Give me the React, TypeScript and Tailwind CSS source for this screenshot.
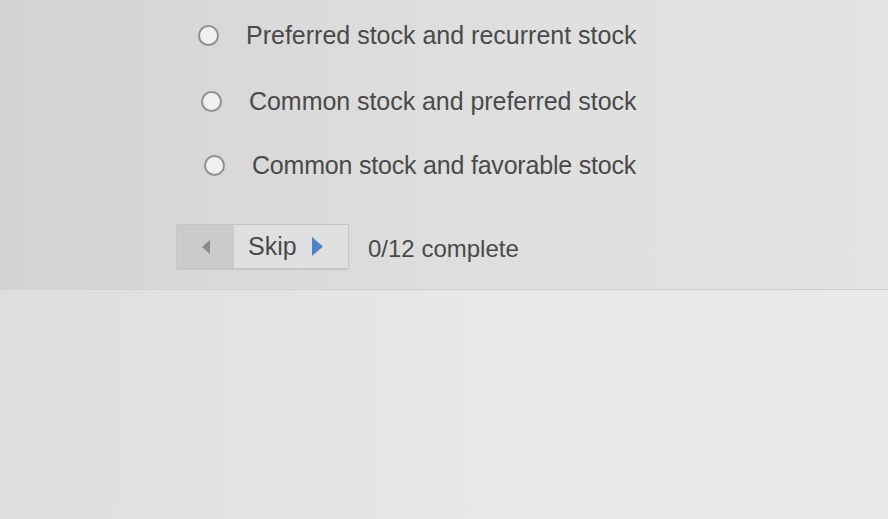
import React from "react";

const options = [
  { label: "Preferred stock and recurrent stock", pl: "pl-[198px]", pt: "pt-[22px]", tr: "tracking-[0px]" },
  { label: "Common stock and preferred stock", pl: "pl-[201px]", pt: "pt-[40px]", tr: "tracking-[-0.05px]" },
  { label: "Common stock and favorable stock", pl: "pl-[204px]", pt: "pt-[38px]", tr: "tracking-[-0.2px]" },
];

export default function App() {
  return (
    <div
      className="w-[888px] h-[519px] overflow-hidden flex flex-col text-[#4a4a4a]"
      style={{ fontFamily: '"Liberation Sans", Arial, sans-serif' }}
    >
      <div className="h-[289px] bg-linear-to-r from-[#d3d3d3] via-[#dedede] to-[#e3e3e3] flex flex-col">
        {options.map((o) => (
          <div key={o.label} className={`flex items-center gap-[27px] ${o.pl} ${o.pt}`}>
            <span className="w-[21px] h-[21px] rounded-full border-[2px] border-[#909090] bg-[#f0f0f0] shrink-0" />
            <span className={`text-[25px] leading-[26px] ${o.tr}`}>{o.label}</span>
          </div>
        ))}
        <div className="flex items-center pl-[176px] pt-[46px] gap-[19px]">
          <div className="flex h-[45px] border border-[#c4c4c4] rounded-[2px] shadow-[0_1px_1px_rgba(0,0,0,0.08)]">
            <div className="w-[57px] bg-[#cbcbcb] flex items-center justify-center">
              <svg width="10" height="14" viewBox="0 0 10 14">
                <polygon points="9,0 9,14 1,7" fill="#8a8a8a" />
              </svg>
            </div>
            <div className="w-[114px] bg-[#e0e0e0] flex items-center pl-[14px] gap-[14px]">
              <span className="text-[25px]">Skip</span>
              <svg width="13" height="19" viewBox="0 0 13 19">
                <polygon points="1,0 1,19 12,9.5" fill="#4a86c5" />
              </svg>
            </div>
          </div>
          <span className="text-[24px] pt-[4px]">0/12 complete</span>
        </div>
      </div>
      <div className="flex-1 bg-linear-to-r from-[#dedede] via-[#e7e7e7] to-[#e9e9e9] border-t border-[#d0d0d0]" />
    </div>
  );
}
